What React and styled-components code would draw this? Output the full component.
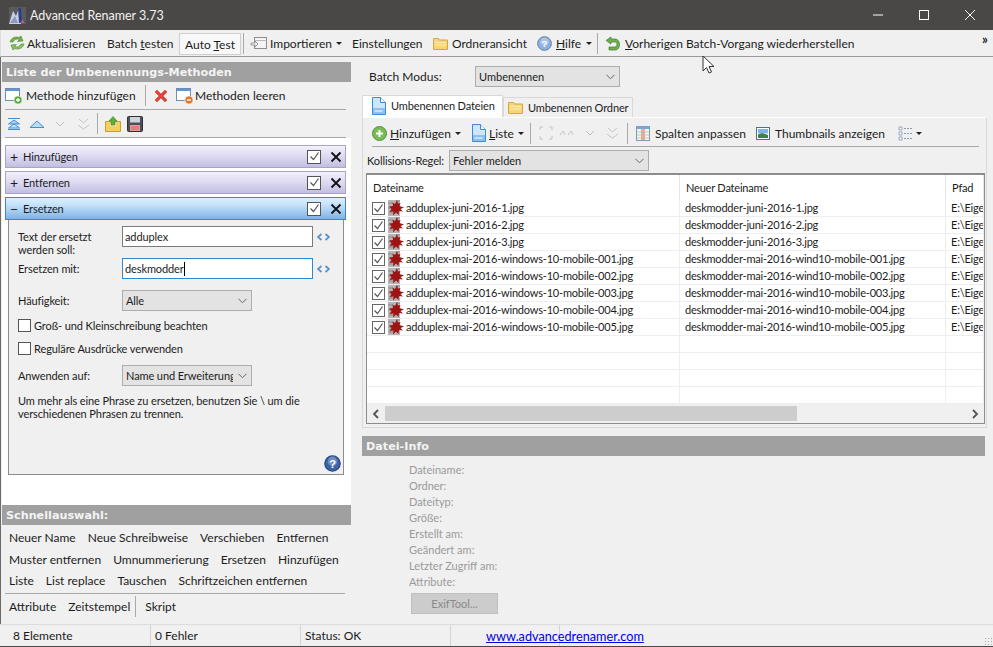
import React from 'react';
import styled, { createGlobalStyle } from 'styled-components';

const GlobalStyle = createGlobalStyle`
  html, body { margin: 0; padding: 0; background: #f0f0f0; }
  body { font-family: Lato, "Liberation Sans", sans-serif; font-size: 12px; color: #1c1c1c; }
  * { box-sizing: border-box; }
  svg { flex: none; }
  u { text-underline-offset: 1px; }
`;

/* ---------- icons ---------- */
const RefreshIcon = () => (
  <svg width="18" height="16" viewBox="0 0 18 16">
    <path d="M2 7C3 3 7 1 11 2.500L13 1L15 6L9.500 6.500L11.500 4.500C8.500 3.500 6 4.500 5 7Z" fill="#6fb04a" stroke="#4b8a35" strokeWidth=".6" />
    <path d="M16 9C15 13 11 15 7 13.500L5 15L3 10L8.500 9.500L6.500 11.500C9.500 12.500 12 11.500 13 9Z" fill="#86c25c" stroke="#4b8a35" strokeWidth=".6" />
  </svg>
);
const ImportIcon = () => (
  <svg width="17" height="14" viewBox="0 0 17 14">
    <rect x="4.500" y="1.500" width="12" height="11" fill="#f4f4f4" stroke="#8d8d8d" />
    <path d="M4.500 4.500h12" stroke="#bbb" />
    <path d="M1 7h4V5l3 3-3 3V9H1Z" fill="#eee" stroke="#888" strokeWidth=".8" />
  </svg>
);
const FolderIcon = () => (
  <svg width="15" height="13" viewBox="0 0 15 13">
    <path d="M.500 2.500V1.500h5l1 1.500h8v9.500h-14Z" fill="#f6d577" stroke="#d9a53d" />
    <path d="M2 5h11v1H2zM2 7.500h11v1H2z" fill="#fdf0b8" />
  </svg>
);
const HelpIcon = ({ size = 15, dark }) => (
  <svg width={size} height={size} viewBox="0 0 16 16">
    <circle cx="8" cy="8" r="7.300" fill={dark ? '#3d62a8' : '#8fb1de'} stroke={dark ? '#27457f' : '#54779f'} />
    <circle cx="8" cy="6" r="4.500" fill="#fff" opacity=".25" />
    <text x="8" y="12" fontSize="10.500" fontWeight="700" textAnchor="middle" fill="#fff" fontFamily="Liberation Sans, sans-serif">?</text>
  </svg>
);
const UndoIcon = () => (
  <svg width="15" height="15" viewBox="0 0 15 15">
    <path d="M6 1L1 4.500L6 8V6H10C11.500 6 12 7 12 8.500C12 10 11 11 9.500 11H4V14H10C13 14 14.500 11.500 14.500 8.500C14.500 5.500 13 3 10 3H6Z" fill="#6fb04a" stroke="#3f7d2f" strokeWidth=".7" />
  </svg>
);
const WindowIcon = ({ badge }) => (
  <svg width="18" height="18" viewBox="0 0 18 18">
    <rect x=".500" y="1.500" width="14" height="12" fill="#fff" stroke="#6d8db5" />
    <rect x="1" y="2" width="13" height="2" fill="#5e97d8" />
    <circle cx="13" cy="13" r="4" fill={badge === 'plus' ? '#58a83c' : '#e2752a'} stroke="#fff" strokeWidth=".5" />
    {badge === 'plus'
      ? <path d="M11 13h4M13 11v4" stroke="#fff" strokeWidth="1.300" />
      : <path d="M11 13h4" stroke="#fff" strokeWidth="1.500" />}
  </svg>
);
const RedCross = () => (
  <svg width="14" height="14" viewBox="0 0 14 14">
    <path d="M1 3L3 1L7 5L11 1L13 3L9 7L13 11L11 13L7 9L3 13L1 11L5 7Z" fill="#e2423a" stroke="#c4322c" strokeWidth=".5" />
  </svg>
);
const TopIcon = () => (
  <svg width="14" height="14" viewBox="0 0 14 14">
    <path d="M1 1.500h12M1 12.500h12" stroke="#3e8fd6" />
    <path d="M1.500 7L7 3l5.500 4Z" fill="#a8d0f2" stroke="#3e8fd6" />
    <path d="M1.500 11L7 7l5.500 4Z" fill="#cfe6f9" stroke="#3e8fd6" />
  </svg>
);
const UpIcon = () => (
  <svg width="16" height="10" viewBox="0 0 16 10">
    <path d="M1 8.500L8 2l7 6.500Z" fill="#bcdcf6" stroke="#3e8fd6" />
  </svg>
);
const DownFaint = () => (
  <svg width="12" height="8" viewBox="0 0 12 8">
    <path d="M2 2l4 4 4-4" fill="none" stroke="#bcbcbc" />
  </svg>
);
const BottomFaint = () => (
  <svg width="13" height="12" viewBox="0 0 13 12">
    <path d="M2 1l4.500 4L11 1M1 7l5.500 4L12 7" fill="none" stroke="#c4c4c4" />
  </svg>
);
const LoadIcon = () => (
  <svg width="16" height="16" viewBox="0 0 16 16">
    <path d="M.500 5.500h15v10h-15Z" fill="#f5cf60" stroke="#cf9a2e" />
    <path d="M5 6h6v4H5Z" fill="#fdf0b8" />
    <path d="M8 .500L12 5H10V9H6V5H4Z" fill="#5bb035" stroke="#3b8a22" strokeWidth=".6" />
  </svg>
);
const SaveIcon = () => (
  <svg width="16" height="16" viewBox="0 0 16 16">
    <path d="M.500 1.500a1 1 0 0 1 1-1h13a1 1 0 0 1 1 1v13a1 1 0 0 1-1 1h-13a1 1 0 0 1-1-1Z" fill="#4a4f5a" stroke="#2e3138" />
    <rect x="3" y="1" width="10" height="5.500" fill="#cfd3da" />
    <rect x="3" y="9" width="10" height="6" fill="#eb9a93" />
    <path d="M4 11h8M4 13h8" stroke="#c86a62" />
  </svg>
);
const AddIcon = () => (
  <svg width="15" height="15" viewBox="0 0 15 15">
    <circle cx="7.500" cy="7.500" r="7" fill="#79bb55" stroke="#4f9636" />
    <path d="M4 7.500h7M7.500 4v7" stroke="#fff" strokeWidth="2" />
  </svg>
);
const DocIcon = () => (
  <svg width="15" height="18" viewBox="0 0 15 18">
    <path d="M1.500.500h8l5 5v12h-13Z" fill="#cfe5fa" stroke="#3f8bd0" />
    <path d="M9.500.500v5h5" fill="#fff" stroke="#3f8bd0" />
    <rect x="2" y="11" width="12" height="6" fill="#8dc0ef" />
    <path d="M3.500 14h8" stroke="#fff" />
  </svg>
);
const ColumnsIcon = () => (
  <svg width="14" height="15" viewBox="0 0 14 15">
    <rect x=".500" y=".500" width="13" height="14" fill="#f4f4f4" stroke="#7f9cc0" />
    <rect x="1" y="1" width="12" height="2" fill="#79a7dd" />
    <path d="M5 3h4v11H5z" fill="#f0a9a0" />
    <path d="M1 6h12M1 9h12M1 12h12" stroke="#9bc58f" strokeWidth=".7" />
  </svg>
);
const ThumbIcon = () => (
  <svg width="14" height="13" viewBox="0 0 14 13">
    <rect x=".500" y=".500" width="13" height="12" fill="#fff" stroke="#4d6f94" />
    <rect x="2" y="2" width="10" height="4.500" fill="#7fb5e6" />
    <path d="M2 11V7.500L6 6l6 2v3Z" fill="#3f7f55" />
  </svg>
);
const ViewIcon = () => (
  <svg width="16" height="15" viewBox="0 0 16 15">
    <path d="M1 1h3v3H1zM1 6h3v3H1zM1 11h3v3H1z" fill="#fff" stroke="#7f94ad" strokeWidth=".8" />
    <path d="M6 2.500h9M6 7.500h9M6 12.500h9" stroke="#8a9bb0" strokeDasharray="2 1" />
  </svg>
);
const FaintExpand = () => (
  <svg width="14" height="14" viewBox="0 0 14 14">
    <path d="M1 4V1h3M10 1h3v3M13 10v3h-3M4 13H1v-3" fill="none" stroke="#c4c4c4" />
  </svg>
);
const FaintLR = () => (
  <svg width="15" height="8" viewBox="0 0 15 8">
    <path d="M1 6l3-4 2 4M9 6l3-4 2 4" fill="none" stroke="#c4c4c4" />
  </svg>
);
const Check = () => (
  <svg width="11" height="11" viewBox="0 0 11 11">
    <path d="M1.500 5.500l3 3 5-7" fill="none" stroke="#555" strokeWidth="1.200" />
  </svg>
);
const CloseGlyph = () => (
  <svg width="12" height="12" viewBox="0 0 12 12">
    <path d="M1.500 1.500l9 9M10.500 1.500l-9 9" stroke="#111" strokeWidth="1.800" />
  </svg>
);
const Chevron = () => (
  <svg width="9" height="6" viewBox="0 0 9 6">
    <path d="M.5 .8l4 4 4-4" fill="none" stroke="#666" />
  </svg>
);
const ArrowsGlyph = () => (
  <svg width="13" height="8" viewBox="0 0 13 8">
    <path d="M4.500 1L1 4l3.500 3M8.500 1L12 4 8.500 7" fill="none" stroke="#5b93c9" strokeWidth="1.800" />
  </svg>
);
const SplatIcon = () => (
  <svg width="16" height="16" viewBox="0 0 16 16">
    <rect x="0" y="0" width="12" height="16" fill="#b5b5b5" />
    <path d="M0 3h5M0 8h3M1 13h5M8 1h4" stroke="#8a8a8a" />
    <path d="M9 0L10 3.500L12.500 3L11.500 6L16 7.500L12.500 9L15 11.500L11 11L10.500 15L8 12.500L5 15.500L5.500 11.500L1.500 12L3.500 9L1 6.500L5 6L4.500 2.500L7 4Z" fill="#9e1414" />
  </svg>
);
const ScrollArrow = ({ right }) => (
  <svg width="8" height="10" viewBox="0 0 8 10">
    <path d={right ? 'M2 1l4 4-4 4' : 'M6 1L2 5l4 4'} fill="none" stroke="#555" strokeWidth="1.800" />
  </svg>
);
const AppLogoIcon = () => (
  <svg width="17" height="17" viewBox="0 0 17 17">
    <rect x="0" y="0" width="17" height="17" fill="#5a5a60" />
    <path d="M0 17L4 4L7 9L10 1L12 17Z" fill="#c9d0e2" />
    <path d="M9 1L12 1L13 13L17 15L10 16Z" fill="#2d3f86" />
    <path d="M1 16L6 9L9 16Z" fill="#8e97bd" />
    <path d="M13 12l3 4h-4Z" fill="#c85a8a" />
  </svg>
);

/* ---------- window ---------- */
const Window = styled.div`
  position: relative;
  width: 993px;
  height: 647px;
  overflow: hidden;
  display: flex;
  flex-direction: column;
  background: #f0f0f0;
  border-bottom: 1px solid #4a4846;
`;
const TitleBar = styled.div`
  height: 30px;
  flex: none;
  background: #4a4846;
  color: #f2f2f2;
  font-size: 12.500px;
  display: flex;
  align-items: center;
  padding-left: 9px;
`;
const LogoBox = styled.div`
  display: flex;
  margin-right: 4px;
`;
const TitleText = styled.span`
  flex: 1;
`;
const CaptionButton = styled.div`
  width: 46px;
  height: 30px;
  display: flex;
  align-items: center;
  justify-content: center;
`;

const MainToolbar = styled.div`
  height: 27px;
  flex: none;
  display: flex;
  align-items: center;
  padding-left: 7px;
  background: #f0f0f0;
  border-bottom: 1px solid #9a9a9a;
  border-left: 1px solid #ddd;
  position: relative;
`;
const ToolItem = styled.div`
  display: flex;
  align-items: center;
  gap: ${(p) => p.$gap ?? 4}px;
  width: ${(p) => p.$w}px;
  margin-left: ${(p) => p.$ml ?? 0}px;
  flex: none;
  white-space: nowrap;
`;
const ToggleItem = styled.div`
  width: 62px;
  height: 22px;
  flex: none;
  margin-top: 2px;
  background: #f8f8f8;
  border: 1px solid #cfcfcf;
  display: flex;
  align-items: center;
  justify-content: center;
  white-space: nowrap;
`;
const ToolSep = styled.div`
  width: 1px;
  height: ${(p) => p.$h ?? 21}px;
  margin: 0 ${(p) => p.$mr ?? 6}px 0 ${(p) => p.$ml ?? 3}px;
  background: #a9a9a9;
  flex: none;
`;
const Caret = styled.span`
  width: 6px;
  height: 3px;
  flex: none;
  margin-left: ${(p) => p.$ml ?? 1}px;
  border-left: 3px solid transparent;
  border-right: 3px solid transparent;
  border-top: 3px solid #222;
`;
const Overflow = styled.span`
  position: absolute;
  right: 5px;
  top: 3px;
  font-size: 13px;
  font-weight: 700;
  line-height: 12px;
`;

const Body = styled.div`
  flex: 1;
  display: flex;
  min-height: 0;
`;

/* ---------- left column ---------- */
const LeftPanel = styled.div`
  width: 352px;
  flex: none;
  display: flex;
  flex-direction: column;
  padding-top: 5px;
  border-left: 1px solid #6a6a6a;
  padding-left: 1px;
  padding-right: 1px;
`;
const SectionHeader = styled.div`
  height: ${(p) => p.$h ?? 20}px;
  flex: none;
  background: #a0a0a0;
  color: #f4f4f4;
  font-family: "DejaVu Sans", sans-serif;
  font-weight: 700;
  font-size: 11.200px;
  display: flex;
  align-items: center;
  padding: 1px 0 0 4px;
`;
const DateiHeader = styled(SectionHeader)`
  margin: 8px 1px 0 0;
`;
const MethodBar = styled.div`
  height: ${(p) => p.$h}px;
  flex: none;
  margin: 0 5px 0 3px;
  display: flex;
  align-items: center;
  border-bottom: 1px solid #a8a8a8;
`;
const IconSlot = styled.span`
  width: ${(p) => p.$w}px;
  display: flex;
  justify-content: center;
  flex: none;
`;
const ScrollArea = styled.div`
  flex: 1;
  background: #fff;
  padding: 7px 5px 0 3px;
  font-size: 11px;
  letter-spacing: -.1px;
  display: flex;
  flex-direction: column;
`;
const MethodHead = styled.div`
  height: 23px;
  flex: none;
  margin-bottom: ${(p) => (p.$open ? 0 : 3)}px;
  border: 1px solid ${(p) => (p.$open ? '#3f84cf' : '#a9a5c9')};
  background: ${(p) => (p.$open
    ? 'linear-gradient(#dff0fd 0%, #c3e1f9 35%, #7fb2e6 100%)'
    : 'linear-gradient(#f3f1fb 0%, #dcd9f2 50%, #c2bee2 100%)')};
  display: flex;
  align-items: center;
  padding: 0 2px 0 4px;
`;
const HeadSign = styled.span`
  width: 13px;
  font-size: 14px;
  line-height: 14px;
  flex: none;
`;
const HeadTitle = styled.span`
  flex: 1;
`;
const CheckBox = styled.span`
  width: ${(p) => p.$size ?? 13}px;
  height: ${(p) => p.$size ?? 13}px;
  flex: none;
  background: #fff;
  border: 1px solid ${(p) => p.$border ?? '#555'};
  display: inline-flex;
  align-items: center;
  justify-content: center;
`;
const HeadClose = styled.span`
  margin-left: 9px;
  margin-right: 1px;
  display: flex;
`;
const MethodBody = styled.div`
  height: 255px;
  flex: none;
  margin: 0 2px 0 3px;
  background: #f0f0f0;
  border: 1px solid #8c8c8c;
  border-top: 0;
  padding: 6px 0 0 9px;
  display: flex;
  flex-direction: column;
  position: relative;
`;
const FormRow = styled.div`
  display: flex;
  align-items: ${(p) => p.$align ?? 'center'};
  height: 21px;
  margin-top: ${(p) => p.$mt ?? 0}px;
  margin-bottom: ${(p) => p.$mb ?? 0}px;
`;
const FormLabel = styled.div`
  width: 104px;
  flex: none;
  line-height: 13px;
  padding-top: ${(p) => p.$pt ?? 0}px;
`;
const TextBox = styled.div`
  width: 191px;
  height: 21px;
  flex: none;
  background: #fff;
  border: 1px solid ${(p) => (p.$focus ? '#2b8ad6' : '#7a7a7a')};
  padding-left: 2px;
  display: flex;
  align-items: center;
`;
const TextCaret = styled.span`
  width: 1px;
  height: 14px;
  background: #000;
`;
const FieldArrows = styled.span`
  margin-left: 4px;
  align-self: center;
  display: flex;
`;
const Select = styled.div`
  width: ${(p) => p.$w}px;
  height: 21px;
  flex: none;
  background: #e3e3e3;
  border: 1px solid #adadad;
  font-size: 11px;
  display: flex;
  align-items: center;
  padding: 0 4px 0 ${(p) => p.$pl ?? 3}px;
`;
const SelectText = styled.span`
  flex: 1;
  margin-right: 5px;
  overflow: hidden;
  white-space: nowrap;
`;
const CheckRow = styled.div`
  display: flex;
  align-items: center;
  gap: 3px;
  height: 13px;
  margin: ${(p) => p.$mt}px 0 0 0;
`;
const Hint = styled.div`
  margin-top: 8px;
  width: 310px;
  line-height: 13px;
`;
const HelpButton = styled.div`
  position: absolute;
  right: 2px;
  bottom: 2px;
  display: flex;
`;
const QuickRow = styled.div`
  height: ${(p) => p.$h ?? 21}px;
  flex: none;
  display: flex;
  align-items: center;
  padding-left: 7px;
  gap: ${(p) => p.$gap ?? 12}px;
  white-space: nowrap;
`;
const QuickFoot = styled(QuickRow)`
  margin: 2px 6px 6px 3px;
  padding-left: 4px;
  height: 25px;
  border-top: 1px solid #a8a8a8;
`;

/* ---------- right column ---------- */
const RightPanel = styled.div`
  flex: 1;
  display: flex;
  flex-direction: column;
  padding: 9px 7px 0 10px;
  min-width: 0;
`;
const BatchRow = styled.div`
  display: flex;
  align-items: center;
  height: 21px;
  padding-left: 7px;
`;
const BatchLabel = styled.span`
  width: 106px;
  flex: none;
`;
const Tabs = styled.div`
  display: flex;
  align-items: flex-end;
  height: 22px;
  margin-top: 8px;
  font-size: 11px;
  letter-spacing: -.12px;
`;
const Tab = styled.div`
  width: ${(p) => p.$w}px;
  height: ${(p) => (p.$active ? 22 : 20)}px;
  background: ${(p) => (p.$active ? '#fff' : '#f0f0f0')};
  border: 1px solid #d9d9d9;
  border-bottom: 0;
  display: flex;
  align-items: center;
  gap: 5px;
  padding-left: ${(p) => (p.$active ? 8 : 4)}px;
  padding-bottom: ${(p) => (p.$active ? 2 : 0)}px;
  white-space: nowrap;
`;
const TabPanel = styled.div`
  height: 311px;
  flex: none;
  margin-right: -1px;
  padding: 2px 1px 0 0;
  background: #f0f0f0;
  border: 1px solid #d9d9d9;
  border-top: 1px solid #fff;
  display: flex;
  flex-direction: column;
`;
const FileBar = styled.div`
  height: 27px;
  flex: none;
  margin: 0 6px 0 9px;
  display: flex;
  align-items: center;
  border-bottom: 1px solid #a8a8a8;
`;
const RuleRow = styled.div`
  display: flex;
  align-items: center;
  height: 21px;
  margin: 3px 0 0 4px;
  flex: none;
`;
const RuleLabel = styled.span`
  width: 82px;
  flex: none;
  font-size: 11px;
  letter-spacing: -.1px;
  white-space: nowrap;
`;
const FileList = styled.div`
  width: 619px;
  height: 251px;
  margin: 2px 0 0 3px;
  flex: none;
  background: #fff;
  border: 1px solid #8c8c8c;
  border-top: 2px solid #8c8c8c;
  font-size: 11px;
  letter-spacing: -.2px;
  display: flex;
  flex-direction: column;
  overflow: hidden;
`;
const ListGrid = styled.div`
  display: grid;
  grid-template-columns: 313px 266px 1fr;
  height: ${(p) => p.$h ?? 17}px;
  flex: none;
  border-bottom: ${(p) => (p.$head ? 0 : '1px solid #eeeeee')};
  white-space: nowrap;
  line-height: 16px;
`;
const HeadCell = styled.div`
  display: flex;
  align-items: center;
  padding-left: 6px;
  border-right: 1px solid #e6e6e6;
`;
const Cell = styled.div`
  display: flex;
  align-items: center;
  padding-left: ${(p) => p.$pl ?? 5}px;
  border-right: 1px solid #eeeeee;
  overflow: hidden;
`;
const RowIcon = styled.span`
  display: flex;
  margin: 0 2px 0 3px;
`;
const HScroll = styled.div`
  height: 19px;
  flex: none;
  margin-top: auto;
  background: #f0f0f0;
  display: flex;
  align-items: center;
`;
const ScrollEnd = styled.div`
  width: 18px;
  flex: none;
  display: flex;
  justify-content: center;
`;
const ScrollTrack = styled.div`
  flex: 1;
  height: 15px;
`;
const ScrollThumb = styled.div`
  height: 100%;
  background: #cdcdcd;
`;
const InfoList = styled.div`
  padding: 6px 0 0 47px;
  color: #9a9a9a;
  font-size: 11px;
`;
const InfoLine = styled.div`
  height: 16px;
  line-height: 16px;
`;
const ExifButton = styled.div`
  width: 87px;
  height: 21px;
  margin: 3px 0 0 2px;
  background: #cccccc;
  border: 1px solid #bfbfbf;
  color: #8a8a8a;
  display: flex;
  align-items: center;
  justify-content: center;
`;

/* ---------- status bar ---------- */
const StatusBar = styled.div`
  height: 22px;
  flex: none;
  display: flex;
  align-items: center;
  border-top: 1px solid #dcdcdc;
  background: #f0f0f0;
  position: relative;
`;
const StatusCell = styled.div`
  width: ${(p) => p.$w}px;
  height: 100%;
  flex: none;
  display: flex;
  align-items: center;
  padding-left: ${(p) => p.$pl ?? 4}px;
  border-right: 1px solid #d4d4d4;
  white-space: nowrap;
`;
const StatusLink = styled.a`
  color: #0000e6;
  font-size: 12.700px;
  text-decoration: underline;
`;
const Grip = styled.div`
  position: absolute;
  right: 1px;
  bottom: 1px;
  width: 8px;
  height: 8px;
  background: radial-gradient(circle, #a8a8a8 1px, transparent 1px) 0 0 / 3px 3px;
`;
const Pointer = styled.svg`
  position: absolute;
  left: 702px;
  top: 55px;
`;

const files = [
  ['adduplex-juni-2016-1.jpg', 'deskmodder-juni-2016-1.jpg'],
  ['adduplex-juni-2016-2.jpg', 'deskmodder-juni-2016-2.jpg'],
  ['adduplex-juni-2016-3.jpg', 'deskmodder-juni-2016-3.jpg'],
  ['adduplex-mai-2016-windows-10-mobile-001.jpg', 'deskmodder-mai-2016-wind10-mobile-001.jpg'],
  ['adduplex-mai-2016-windows-10-mobile-002.jpg', 'deskmodder-mai-2016-wind10-mobile-002.jpg'],
  ['adduplex-mai-2016-windows-10-mobile-003.jpg', 'deskmodder-mai-2016-wind10-mobile-003.jpg'],
  ['adduplex-mai-2016-windows-10-mobile-004.jpg', 'deskmodder-mai-2016-wind10-mobile-004.jpg'],
  ['adduplex-mai-2016-windows-10-mobile-005.jpg', 'deskmodder-mai-2016-wind10-mobile-005.jpg'],
];
const infoLabels = ['Dateiname:', 'Ordner:', 'Dateityp:', 'Größe:', 'Erstellt am:', 'Geändert am:', 'Letzter Zugriff am:', 'Attribute:'];

function MethodRow({ sign, title, open }) {
  return (
    <MethodHead $open={open}>
      <HeadSign>{sign}</HeadSign>
      <HeadTitle>{title}</HeadTitle>
      <CheckBox $size={14}><Check /></CheckBox>
      <HeadClose><CloseGlyph /></HeadClose>
    </MethodHead>
  );
}

export default function App() {
  return (
    <Window>
      <GlobalStyle />
      <TitleBar>
        <LogoBox><AppLogoIcon /></LogoBox>
        <TitleText>Advanced Renamer 3.73</TitleText>
        <CaptionButton>
          <svg width="10" height="10" viewBox="0 0 10 10"><path d="M0 5h10" stroke="#fff" /></svg>
        </CaptionButton>
        <CaptionButton>
          <svg width="10" height="10" viewBox="0 0 10 10"><rect x=".5" y=".5" width="9" height="9" fill="none" stroke="#fff" /></svg>
        </CaptionButton>
        <CaptionButton>
          <svg width="10" height="10" viewBox="0 0 10 10"><path d="M0 0l10 10M10 0L0 10" stroke="#fff" /></svg>
        </CaptionButton>
      </TitleBar>

      <MainToolbar>
        <ToolItem $w={99} $gap={1}><RefreshIcon />Aktualisieren</ToolItem>
        <ToolItem $w={72}><span>Batch <u>t</u>esten</span></ToolItem>
        <ToggleItem><span>Auto <u>T</u>est</span></ToggleItem>
        <ToolSep $ml={2} />
        <ToolItem $w={102} $gap={3}><ImportIcon />Importieren<Caret /></ToolItem>
        <ToolItem $w={81}>Einstellungen</ToolItem>
        <ToolItem $w={104}><FolderIcon />Ordneransicht</ToolItem>
        <ToolItem $w={60}><HelpIcon /><span><u>H</u>ilfe</span><Caret /></ToolItem>
        <ToolSep $ml={0} $mr={7} />
        <ToolItem $w={250} $gap={5}><UndoIcon /><span><u>V</u>orherigen Batch-Vorgang wiederherstellen</span></ToolItem>
        <Overflow>»</Overflow>
      </MainToolbar>

      <Body>
        <LeftPanel>
          <SectionHeader>Liste der Umbenennungs-Methoden</SectionHeader>
          <MethodBar $h={28}>
            <ToolItem $w={137} $gap={3}><WindowIcon badge="plus" />Methode hinzufügen</ToolItem>
            <ToolSep $ml={3} $mr={6} />
            <IconSlot $w={17}><RedCross /></IconSlot>
            <ToolItem $w={120} $ml={7} $gap={1}><WindowIcon badge="minus" />Methoden leeren</ToolItem>
          </MethodBar>
          <MethodBar $h={28}>
            <IconSlot $w={18}><TopIcon /></IconSlot>
            <IconSlot $w={28}><UpIcon /></IconSlot>
            <IconSlot $w={18}><DownFaint /></IconSlot>
            <IconSlot $w={28}><BottomFaint /></IconSlot>
            <ToolSep $ml={0} $mr={7} />
            <IconSlot $w={16}><LoadIcon /></IconSlot>
            <IconSlot $w={28}><SaveIcon /></IconSlot>
          </MethodBar>
          <ScrollArea>
            <MethodRow sign="+" title="Hinzufügen" />
            <MethodRow sign="+" title="Entfernen" />
            <MethodRow sign="−" title="Ersetzen" open />
            <MethodBody>
              <FormRow $align="flex-start" $mb={11}>
                <FormLabel $pt={4}>Text der ersetzt<br />werden soll:</FormLabel>
                <TextBox>adduplex</TextBox>
                <FieldArrows><ArrowsGlyph /></FieldArrows>
              </FormRow>
              <FormRow $mb={11}>
                <FormLabel>Ersetzen mit:</FormLabel>
                <TextBox $focus>deskmodder<TextCaret /></TextBox>
                <FieldArrows><ArrowsGlyph /></FieldArrows>
              </FormRow>
              <FormRow>
                <FormLabel>Häufigkeit:</FormLabel>
                <Select $w={130}><SelectText>Alle</SelectText><Chevron /></Select>
              </FormRow>
              <CheckRow $mt={8}><CheckBox />Groß- und Kleinschreibung beachten</CheckRow>
              <CheckRow $mt={10}><CheckBox />Reguläre Ausdrücke verwenden</CheckRow>
              <FormRow $mt={10}>
                <FormLabel>Anwenden auf:</FormLabel>
                <Select $w={130}><SelectText>Name und Erweiterung</SelectText><Chevron /></Select>
              </FormRow>
              <Hint>Um mehr als eine Phrase zu ersetzen, benutzen Sie \ um die verschiedenen Phrasen zu trennen.</Hint>
              <HelpButton><HelpIcon size={17} dark /></HelpButton>
            </MethodBody>
          </ScrollArea>
          <SectionHeader>Schnellauswahl:</SectionHeader>
          <QuickRow $h={24}>
            <span>Neuer Name</span><span>Neue Schreibweise</span><span>Verschieben</span><span>Entfernen</span>
          </QuickRow>
          <QuickRow>
            <span>Muster entfernen</span><span>Umnummerierung</span><span>Ersetzen</span><span>Hinzufügen</span>
          </QuickRow>
          <QuickRow>
            <span>Liste</span><span>List replace</span><span>Tauschen</span><span>Schriftzeichen entfernen</span>
          </QuickRow>
          <QuickFoot>
            <span>Attribute</span><span>Zeitstempel</span>
            <ToolSep $h={21} $ml={-7} $mr={-3} />
            <span>Skript</span>
          </QuickFoot>
        </LeftPanel>

        <RightPanel>
          <BatchRow>
            <BatchLabel>Batch Modus:</BatchLabel>
            <Select $w={145}><SelectText>Umbenennen</SelectText><Chevron /></Select>
          </BatchRow>
          <Tabs>
            <Tab $active $w={141}><DocIcon />Umbenennen Dateien</Tab>
            <Tab $w={130}><FolderIcon />Umbenennen Ordner</Tab>
          </Tabs>
          <TabPanel>
            <FileBar>
              <ToolItem $w={99} $gap={3}><AddIcon /><span><u>H</u>inzufügen</span><Caret /></ToolItem>
              <ToolItem $w={59} $gap={3}><DocIcon /><span><u>L</u>iste</span><Caret /></ToolItem>
              <ToolSep $ml={0} $mr={6} />
              <IconSlot $w={17}><FaintExpand /></IconSlot>
              <IconSlot $w={24}><FaintLR /></IconSlot>
              <IconSlot $w={24}><DownFaint /></IconSlot>
              <IconSlot $w={20}><BottomFaint /></IconSlot>
              <ToolSep $ml={5} $mr={8} />
              <ToolItem $w={120} $gap={5}><ColumnsIcon />Spalten anpassen</ToolItem>
              <ToolItem $w={142} $gap={5}><ThumbIcon />Thumbnails anzeigen</ToolItem>
              <ToolItem $w={30} $gap={1}><ViewIcon /><Caret /></ToolItem>
            </FileBar>
            <RuleRow>
              <RuleLabel>Kollisions-Regel:</RuleLabel>
              <Select $w={200}><SelectText>Fehler melden</SelectText><Chevron /></Select>
            </RuleRow>
            <FileList>
              <ListGrid $head $h={25}>
                <HeadCell>Dateiname</HeadCell>
                <HeadCell>Neuer Dateiname</HeadCell>
                <HeadCell>Pfad</HeadCell>
              </ListGrid>
              {files.map(([name, next]) => (
                <ListGrid key={name}>
                  <Cell>
                    <CheckBox $size={13} $border="#666"><Check /></CheckBox>
                    <RowIcon><SplatIcon /></RowIcon>
                    {name}
                  </Cell>
                  <Cell>{next}</Cell>
                  <Cell>E:\Eigene</Cell>
                </ListGrid>
              ))}
              {[0, 1, 2, 3].map((n) => (
                <ListGrid key={n}><Cell /><Cell /><Cell /></ListGrid>
              ))}
              <HScroll>
                <ScrollEnd><ScrollArrow /></ScrollEnd>
                <ScrollTrack>
                  <ScrollThumb style={{ width: `${(412 / 581) * 100}%` }} />
                </ScrollTrack>
                <ScrollEnd><ScrollArrow right /></ScrollEnd>
              </HScroll>
            </FileList>
          </TabPanel>
          <DateiHeader>Datei-Info</DateiHeader>
          <InfoList>
            {infoLabels.map((l) => <InfoLine key={l}>{l}</InfoLine>)}
            <ExifButton>ExifTool...</ExifButton>
          </InfoList>
        </RightPanel>
      </Body>

      <StatusBar>
        <StatusCell $w={151} $pl={13}>8 Elemente</StatusCell>
        <StatusCell $w={150} $pl={4}>0 Fehler</StatusCell>
        <StatusCell $w={150} $pl={4}>Status: OK</StatusCell>
        <StatusCell $w={109} $pl={35}><StatusLink>www.advancedrenamer.com</StatusLink></StatusCell>
        <Grip />
      </StatusBar>

      <Pointer width="14" height="20" viewBox="0 0 14 20">
        <path d="M1 1v15l3.500-3.500L7 18l2.500-1L7 11.500h5Z" fill="#fff" stroke="#333" />
      </Pointer>
    </Window>
  );
}
